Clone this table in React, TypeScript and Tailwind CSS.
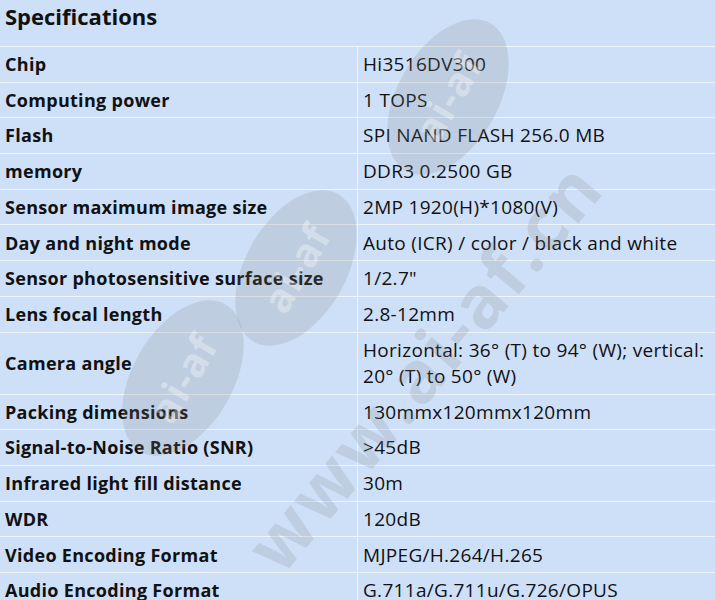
import React from "react";

const rows: { label: string; value: React.ReactNode }[] = [
  { label: "Chip", value: "Hi3516DV300" },
  { label: "Computing power", value: "1 TOPS" },
  { label: "Flash", value: "SPI NAND FLASH 256.0 MB" },
  { label: "memory", value: "DDR3 0.2500 GB" },
  { label: "Sensor maximum image size", value: "2MP 1920(H)*1080(V)" },
  { label: "Day and night mode", value: "Auto (ICR) / color / black and white" },
  { label: "Sensor photosensitive surface size", value: '1/2.7"' },
  { label: "Lens focal length", value: "2.8-12mm" },
  {
    label: "Camera angle",
    value: (
      <span>
        Horizontal: 36° (T) to 94° (W); vertical:
        <br />
        20° (T) to 50° (W)
      </span>
    ),
  },
  { label: "Packing dimensions", value: "130mmx120mmx120mm" },
  { label: "Signal-to-Noise Ratio (SNR)", value: ">45dB" },
  { label: "Infrared light fill distance", value: "30m" },
  { label: "WDR", value: "120dB" },
  { label: "Video Encoding Format", value: "MJPEG/H.264/H.265" },
  { label: "Audio Encoding Format", value: "G.711a/G.711u/G.726/OPUS" },
];

function Blob({ cx, cy }: { cx: number; cy: number }) {
  return (
    <div
      className="absolute flex h-[100px] w-[170px] items-center justify-center rounded-[50%] bg-[rgba(128,128,128,0.2)]"
      style={{ left: cx, top: cy, transform: "translate(-50%, -50%) rotate(-60deg)" }}
    >
      <span className="text-[40px] font-bold leading-none tracking-[1px] text-[rgba(255,255,255,0.35)]">ai-af</span>
    </div>
  );
}

export default function App() {
  return (
    <div
      className="relative h-[600px] w-[715px] overflow-hidden bg-[#cde0f8] text-[#111]"
      style={{ fontFamily: '"Open Sans", "Noto Sans", sans-serif' }}
    >
      <div className="flex h-[47px] items-start border-b border-[#eef5fd] px-[5px] pt-[1px] text-[22px] font-bold leading-[30px]">
        Specifications
      </div>
      {rows.map((r) => (
        <div key={r.label} className="flex border-b border-[#eef5fd]">
          <div className="flex w-[358px] shrink-0 items-center border-r border-[#eef5fd] px-[5px] py-[4.1px] text-[18px] font-bold leading-[26.5px] tracking-[0.3px]">
            {r.label}
          </div>
          <div className="flex flex-1 items-center px-[5px] py-[4.1px] text-[19px] leading-[26.5px] tracking-[0.3px]">
            {r.value}
          </div>
        </div>
      ))}
      <div className="pointer-events-none absolute inset-0">
        <Blob cx={183} cy={378} />
        <Blob cx={296} cy={268} />
        <Blob cx={448} cy={97} />
        <div
          className="absolute whitespace-nowrap text-[72px] font-bold leading-none tracking-[3px] text-[rgba(128,128,128,0.2)]"
          style={{ left: 423, top: 365, transform: "translate(-50%, -50%) rotate(-50deg)" }}
        >
          www.ai-af.cn
        </div>
      </div>
    </div>
  );
}
